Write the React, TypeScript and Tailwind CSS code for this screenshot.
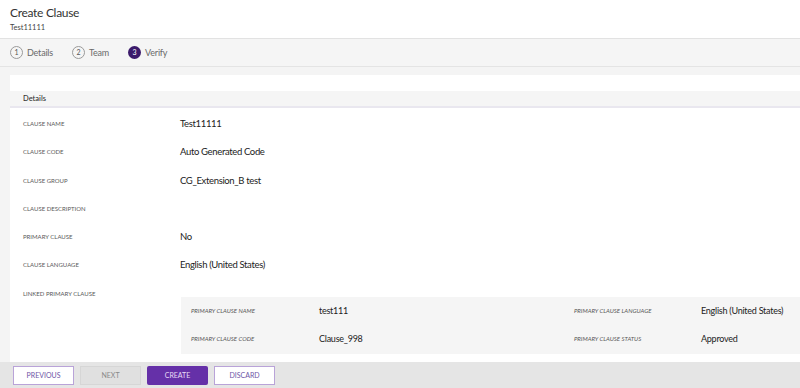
import React from "react"

const font = { fontFamily: 'Lato, "Noto Sans", sans-serif' }

const rows: { label: string; value?: string }[] = [
  { label: "Clause Name", value: "Test11111" },
  { label: "Clause Code", value: "Auto Generated Code" },
  { label: "Clause Group", value: "CG_Extension_B test" },
  { label: "Clause Description" },
  { label: "Primary Clause", value: "No" },
  { label: "Clause Language", value: "English (United States)" },
]

const Step = ({ n, label, active }: { n: number; label: string; active?: boolean }) => (
  <div className="flex items-center gap-[4px]">
    <div
      className={
        active
          ? "flex h-[13px] w-[13px] items-center justify-center rounded-full bg-[#3b1a6b] text-[7px] text-white"
          : "flex h-[13px] w-[13px] items-center justify-center rounded-full border border-[#9a9a9a] text-[7px] text-[#555]"
      }
    >
      {n}
    </div>
    <span className="text-[9px] tracking-[-0.2px] text-[#6a6a6a]">{label}</span>
  </div>
)

export default function App() {
  return (
    <div className="flex h-[388px] w-[800px] flex-col overflow-hidden bg-[#f4f4f4]" style={font}>
      {/* Header */}
      <div className="h-[39px] shrink-0 border-b border-[#e2e2e2] bg-white px-[10px] pt-[4px]">
        <div className="text-[12px] leading-[17px] tracking-[-0.3px] text-[#333]">Create Clause</div>
        <div className="mt-[2px] text-[7.5px] leading-[10px] text-[#444]">Test11111</div>
      </div>

      {/* Stepper */}
      <div className="flex h-[28px] shrink-0 items-center gap-[19px] border-b border-[#e4e4e4] bg-[#f5f5f5] px-[10px]">
        <Step n={1} label="Details" />
        <Step n={2} label="Team" />
        <Step n={3} label="Verify" active />
      </div>

      {/* Content */}
      <div className="min-h-0 flex-1 pl-[10px] pt-[8px]">
        <div className="h-full bg-white pt-[16px]">
          <div className="flex h-[17px] items-center border-b-2 border-[#e9e7ef] bg-[#f5f5f5] px-[13px] text-[7.5px] font-medium text-[#333]">
            Details
          </div>
          <div className="pt-[10px]">
            {rows.map((r) => (
              <div key={r.label} className="flex h-[28.3px] items-start">
                <div className="w-[170px] shrink-0 pl-[13px] text-[6px] uppercase leading-[12px] text-[#5a5a5a]">
                  {r.label}
                </div>
                <div className="-mt-[1px] text-[9.5px] leading-[14px] tracking-[-0.35px] text-[#222]">{r.value}</div>
              </div>
            ))}
            <div className="flex h-[9px] items-start">
              <div className="w-[170px] shrink-0 pl-[13px] text-[6px] uppercase leading-[12px] text-[#5a5a5a]">
                Linked Primary Clause
              </div>
            </div>
            <div className="ml-[171px] grid h-[57px] grid-cols-[128px_255px_127px_1fr] content-center gap-y-[14px] bg-[#f5f5f5] pl-[10px]">
              <div className="text-[6px] uppercase italic leading-[14px] text-[#555]">Primary Clause Name</div>
              <div className="text-[9px] leading-[14px] tracking-[-0.25px] text-[#222]">test111</div>
              <div className="text-[6px] uppercase italic leading-[14px] text-[#555]">Primary Clause Language</div>
              <div className="whitespace-nowrap text-[9px] leading-[14px] tracking-[-0.25px] text-[#222]">English (United States)</div>
              <div className="text-[6px] uppercase italic leading-[14px] text-[#555]">Primary Clause Code</div>
              <div className="text-[9px] leading-[14px] tracking-[-0.25px] text-[#222]">Clause_998</div>
              <div className="text-[6px] uppercase italic leading-[14px] text-[#555]">Primary Clause Status</div>
              <div className="text-[9px] leading-[14px] tracking-[-0.25px] text-[#222]">Approved</div>
            </div>
          </div>
        </div>
      </div>

      {/* Footer */}
      <div className="flex h-[26px] shrink-0 items-center gap-[6px] bg-[#e5e5e5] px-[13px]">
        <button className="h-[19px] w-[61px] border border-[#b9a3d8] bg-white text-[7px] text-[#6e55a6]">PREVIOUS</button>
        <button className="h-[19px] w-[61px] border border-[#d6d6d6] bg-[#e0e0e0] text-[7px] text-[#8a8a8a]">NEXT</button>
        <button className="h-[19px] w-[61px] rounded-[2px] bg-[#6530a8] text-[7px] text-[#e8dcf6]">CREATE</button>
        <button className="h-[19px] w-[61px] border border-[#b9a3d8] bg-white text-[7px] text-[#6e55a6]">DISCARD</button>
      </div>
    </div>
  )
}
